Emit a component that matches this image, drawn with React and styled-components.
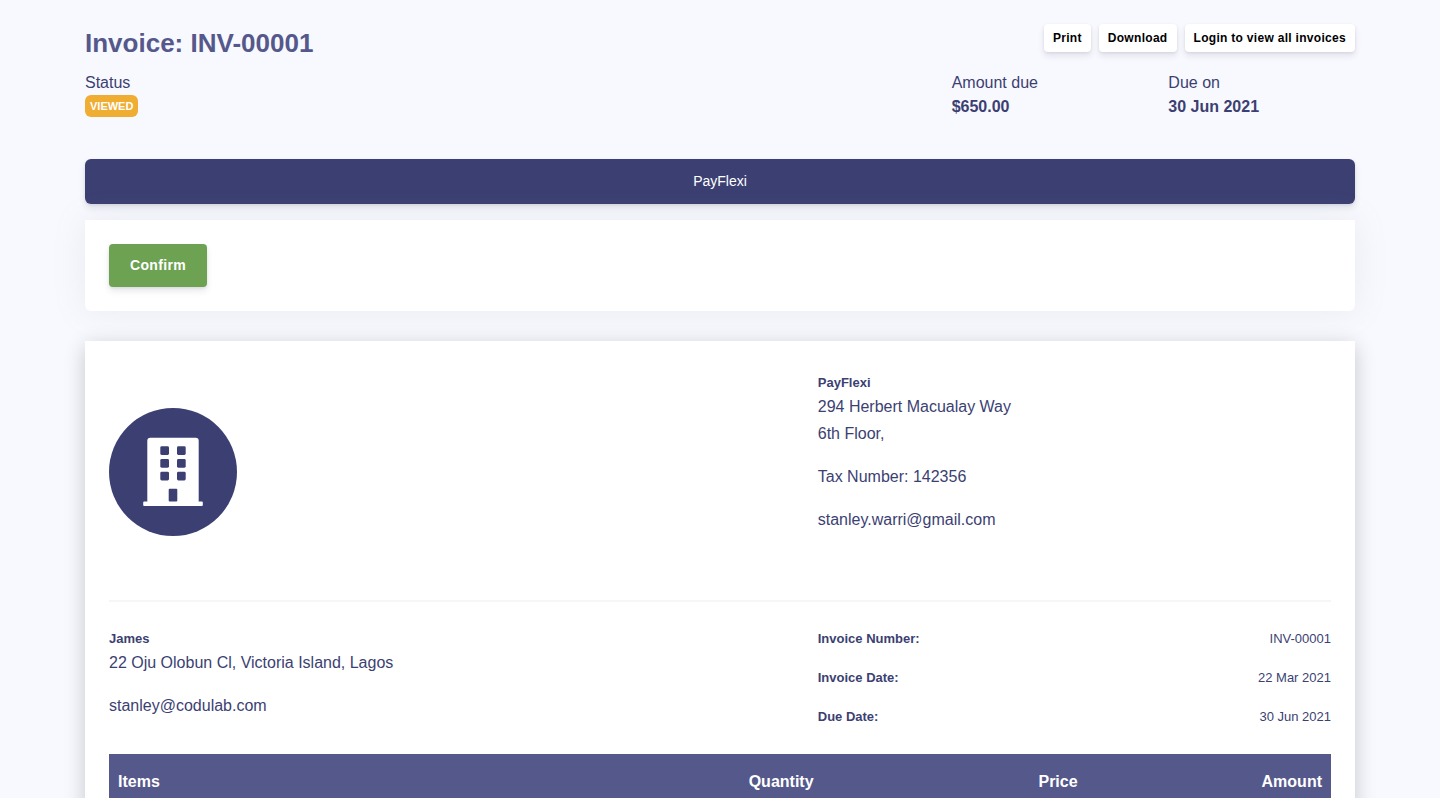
import React from "react";
import styled, { createGlobalStyle, css } from "styled-components";

const colors = {
  page: "#f8f9fe",
  ink: "#3c3f72",
  accent: "#55588b",
  green: "#6da252",
  amber: "#efad32",
  line: "#f6f6f6",
};

const GlobalStyle = createGlobalStyle`
  *, *::before, *::after { box-sizing: border-box; }
  body {
    margin: 0;
    background: ${colors.page};
    color: ${colors.ink};
    font-family: "Liberation Sans", Arial, sans-serif;
    font-size: 16px;
    line-height: 24px;
  }
`;

const Page = styled.main`
  padding: 24px 85px;
`;

const Header = styled.header`
  display: flex;
  justify-content: space-between;
  align-items: flex-start;
`;

const Title = styled.h1`
  margin: 0 0 8px;
  font-size: 26px;
  line-height: 39px;
  color: ${colors.accent};
`;

const Actions = styled.div`
  display: flex;
  gap: 8px;
`;

const buttonShadow = "0 4px 6px rgba(50, 50, 93, 0.11), 0 1px 3px rgba(0, 0, 0, 0.08)";

const buttonBase = css`
  border: 0;
  font-family: inherit;
  cursor: pointer;
  box-shadow: ${buttonShadow};
`;

const smallButton = css`
  ${buttonBase}
  padding: 5px 9px;
  border-radius: 4px;
  background: #fff;
  color: #000;
  font-size: 12px;
  font-weight: 700;
  line-height: 18px;
  letter-spacing: 0.025em;
`;

const ActionButton = styled.button`
  ${smallButton}
`;

const ActionLink = styled.a`
  ${smallButton}
  text-decoration: none;
`;

const Summary = styled.dl`
  display: grid;
  grid-template-columns: repeat(12, 1fr);
  column-gap: 30px;
  margin: 0 0 40px;
`;

const SummaryItem = styled.div`
  grid-column: span ${(p) => p.$span};
`;

const SummaryLabel = styled.dt``;

const SummaryValue = styled.dd`
  margin: 0;
  height: 24px;
  font-weight: 700;
`;

const Badge = styled.span`
  display: block;
  width: fit-content;
  padding: 0 5px;
  border-radius: 6px;
  background: ${colors.amber};
  color: #fff;
  font-size: 11px;
  line-height: 22px;
`;

const GatewayTab = styled.button`
  ${buttonBase}
  display: block;
  width: 100%;
  margin-bottom: 16px;
  padding: 12px;
  border-radius: 6px;
  background: ${colors.ink};
  color: #fff;
  font-size: 14px;
  line-height: 21px;
`;

const GatewayPanel = styled.section`
  margin-bottom: 30px;
  padding: 24px;
  border-radius: 0 0 6px 6px;
  background: #fff;
  box-shadow: 0 0 32px rgba(136, 152, 170, 0.15);
`;

const ConfirmButton = styled.button`
  ${buttonBase}
  display: block;
  padding: 11px 21px;
  border-radius: 4px;
  background: ${colors.green};
  color: #fff;
  font-size: 14px;
  font-weight: 700;
  line-height: 21px;
  letter-spacing: 0.025em;
`;

const Sheet = styled.article`
  padding: 32px 24px 24px;
  background: #fff;
  box-shadow: 0 5px 20px rgba(0, 0, 0, 0.2);
`;

const Split = styled.section`
  display: grid;
  grid-template-columns: 58% 42%;
`;

const CompanySplit = styled(Split)`
  padding-bottom: 64px;
  border-bottom: 2px solid ${colors.line};
`;

const ClientSplit = styled(Split)`
  padding: 27px 0;
`;

const Logo = styled.svg`
  display: block;
  width: 128px;
  height: 128px;
  margin-top: 35px;
`;

const Address = styled.address`
  font-style: normal;
  line-height: 27px;
`;

const PartyName = styled.strong`
  display: block;
  font-size: 13px;
  line-height: 20px;
`;

const AddressLine = styled.p`
  margin: 0 0 ${(p) => (p.$last ? 0 : 16)}px;
`;

const Facts = styled.dl`
  display: grid;
  row-gap: 19px;
  margin: 0;
  font-size: 13px;
  line-height: 20px;
`;

const Fact = styled.div`
  display: flex;
  justify-content: space-between;
`;

const FactLabel = styled.dt`
  font-weight: 700;
`;

const FactValue = styled.dd`
  margin: 0;
`;

const Items = styled.table`
  width: 100%;
  table-layout: fixed;
  border-collapse: collapse;
`;

const ColumnHead = styled.th`
  width: ${(p) => p.$width};
  padding: 16px 9px;
  background: ${colors.accent};
  color: #fff;
  text-align: ${(p) => p.$align};
`;

const facts = [
  ["Invoice Number:", "INV-00001"],
  ["Invoice Date:", "22 Mar 2021"],
  ["Due Date:", "30 Jun 2021"],
];

const columns = [
  { name: "Items", width: "50%", align: "left" },
  { name: "Quantity", width: "10%", align: "center" },
  { name: "Price", width: "20%", align: "right" },
  { name: "Amount", width: "20%", align: "right" },
];

const windowColumns = [51.3, 68];
const windowRows = [38.3, 51, 63.7];

function BuildingLogo() {
  return (
    <Logo viewBox="0 0 128 128" role="img" aria-label="Company logo">
      <circle cx="64" cy="64" r="64" fill={colors.ink} />
      <rect x="38.3" y="29.8" width="51.4" height="66" rx="3" fill="#fff" />
      <rect x="34.2" y="93.5" width="59.6" height="4.6" rx="1" fill="#fff" />
      {windowRows.map((y) =>
        windowColumns.map((x) => (
          <rect key={`${x}-${y}`} x={x} y={y} width="8.7" height="8.7" rx="1.4" fill={colors.ink} />
        ))
      )}
      <rect x="59.7" y="80.7" width="8.6" height="12.8" rx="1" fill={colors.ink} />
    </Logo>
  );
}

export default function App() {
  return (
    <>
      <GlobalStyle />
      <Page>
        <Header>
          <Title>Invoice: INV-00001</Title>
          <Actions>
            <ActionButton type="button">Print</ActionButton>
            <ActionButton type="button">Download</ActionButton>
            <ActionLink href="#login">Login to view all invoices</ActionLink>
          </Actions>
        </Header>

        <Summary>
          <SummaryItem $span={8}>
            <SummaryLabel>Status</SummaryLabel>
            <SummaryValue>
              <Badge>VIEWED</Badge>
            </SummaryValue>
          </SummaryItem>
          <SummaryItem $span={2}>
            <SummaryLabel>Amount due</SummaryLabel>
            <SummaryValue>$650.00</SummaryValue>
          </SummaryItem>
          <SummaryItem $span={2}>
            <SummaryLabel>Due on</SummaryLabel>
            <SummaryValue>30 Jun 2021</SummaryValue>
          </SummaryItem>
        </Summary>

        <GatewayTab type="button">PayFlexi</GatewayTab>
        <GatewayPanel>
          <ConfirmButton type="button">Confirm</ConfirmButton>
        </GatewayPanel>

        <Sheet>
          <CompanySplit>
            <BuildingLogo />
            <Address>
              <PartyName>PayFlexi</PartyName>
              <AddressLine>
                294 Herbert Macualay Way
                <br />
                6th Floor,
              </AddressLine>
              <AddressLine>Tax Number: 142356</AddressLine>
              <AddressLine $last>stanley.warri@gmail.com</AddressLine>
            </Address>
          </CompanySplit>

          <ClientSplit>
            <Address>
              <PartyName>James</PartyName>
              <AddressLine>22 Oju Olobun Cl, Victoria Island, Lagos</AddressLine>
              <AddressLine $last>stanley@codulab.com</AddressLine>
            </Address>
            <Facts>
              {facts.map(([label, value]) => (
                <Fact key={label}>
                  <FactLabel>{label}</FactLabel>
                  <FactValue>{value}</FactValue>
                </Fact>
              ))}
            </Facts>
          </ClientSplit>

          <Items>
            <thead>
              <tr>
                {columns.map((c) => (
                  <ColumnHead key={c.name} scope="col" $width={c.width} $align={c.align}>
                    {c.name}
                  </ColumnHead>
                ))}
              </tr>
            </thead>
          </Items>
        </Sheet>
      </Page>
    </>
  );
}
